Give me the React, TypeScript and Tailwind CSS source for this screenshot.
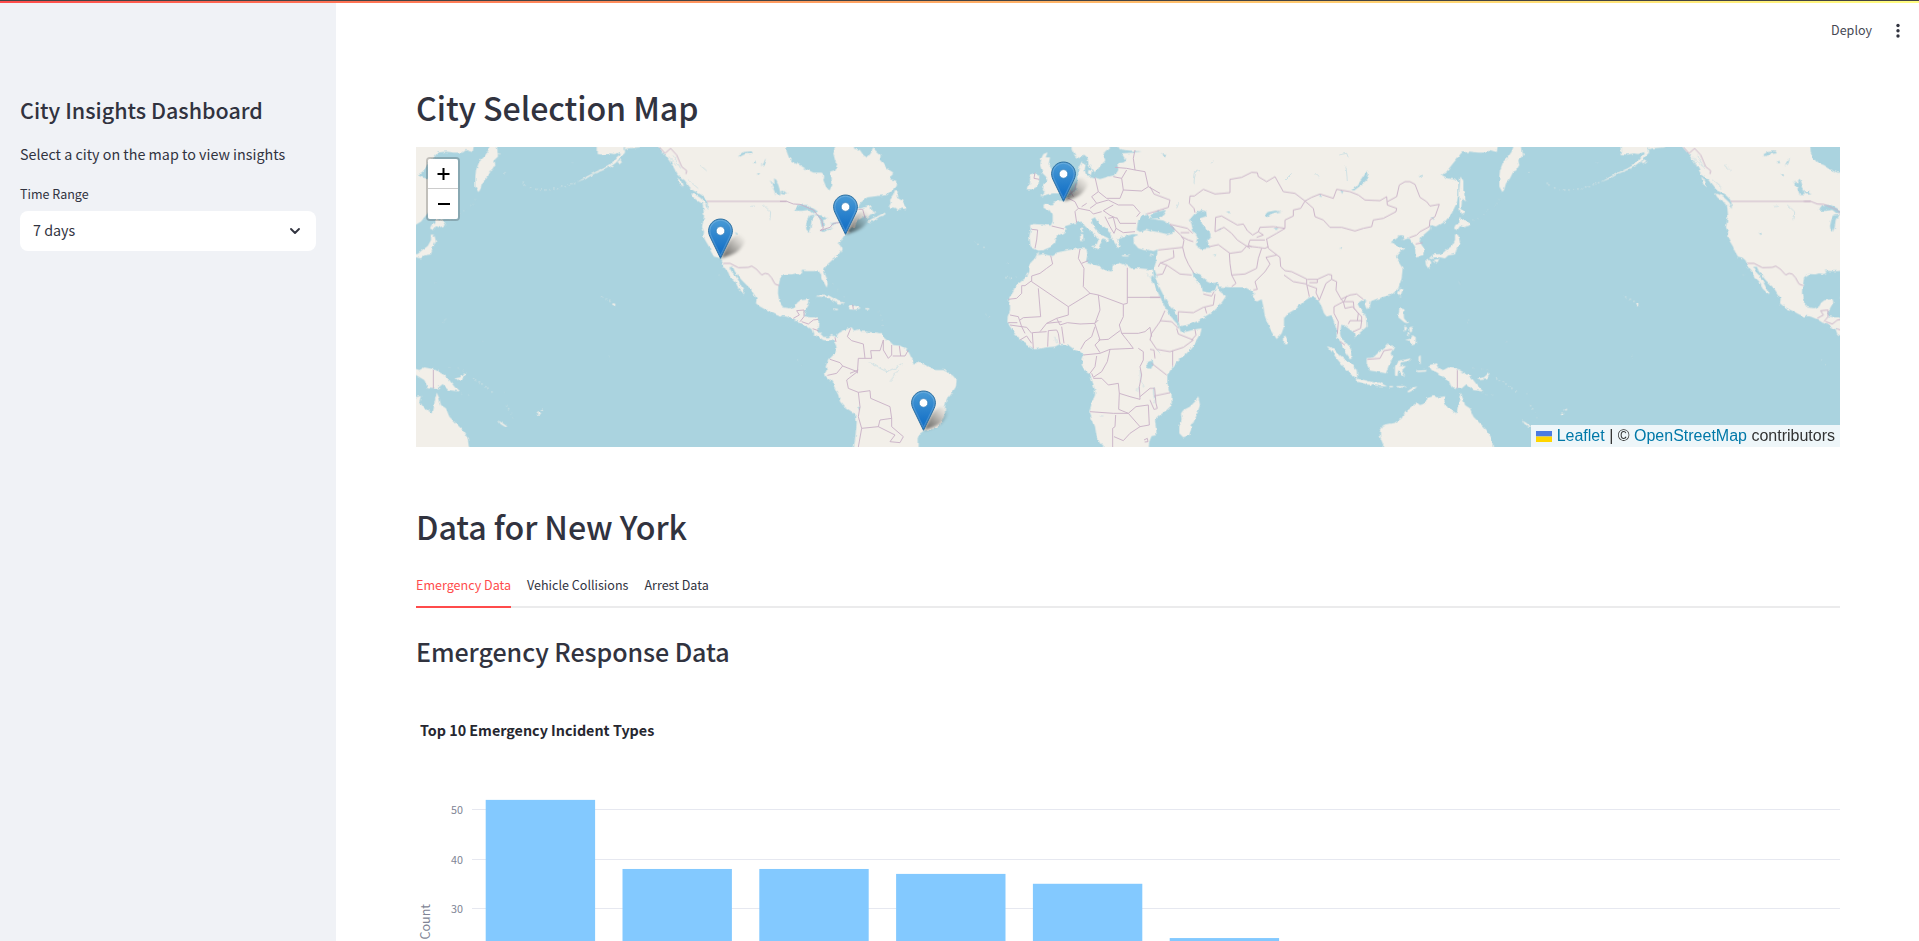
import { ChevronDown } from "lucide-react";

const WEST_LAND = [
  "745,21 760,38 768,48 775,58 783,70 790,82 797,95 803,105 812,112 825,122 832,132 840,142 850,152 862,158 875,165 888,178 893,190 893,207 886,195 878,190 880,205 882,225 880,240 876,262 882,275 880,290 888,305 897,320 903,335 912,350 925,353 935,362 940,375 945,385 955,398 962,415 972,420 980,430 985,445 995,455 1002,463 1003,455 995,440 985,420 975,405 965,395 958,382 968,380 975,395 985,408 995,420 1010,435 1020,445 1030,460 1040,475 1038,490 1050,500 1065,508 1080,515 1095,523 1110,529 1114,529 1114,498 1108,482 1104,460 1105,440 1108,428 1110,415 1114,411 1114,10 745,10",
  "843,160 855,163 870,173 885,186 892,197 880,193 862,182 850,172",
  "802,113 812,122 820,142 808,132",
  "500,127 530,110 560,94 580,86 600,74 612,62 622,50 632,42 630,36 612,42 600,40 580,44 560,42 560,10 644,10 640,30 655,25 690,22 690,10 644,10 645,38 632,52 618,68 604,78 580,90 555,100 530,114",
  "622,66 632,58 637,62 628,70",
  "606,491 614,490 617,496 610,500",
  "380,820 388,816 390,822 382,825",
  "390,810 400,806 398,812",
  "265,842 275,848 292,860 288,862 272,852",
];

const ATLANTIC_LAND = [
  "-2,414 5,408 15,402 35,403 45,400 60,402 68,398 62,392 80,393 100,393 115,392 122,402 125,415 132,428 140,443 143,432 140,415 134,400 132,388 140,375 155,362 170,350 178,340 185,328 182,318 172,306 180,308 185,298 195,285 197,280 212,278 205,272 215,262 225,262 228,252 235,240 248,232 256,226 262,234 272,222 282,222 290,214 278,216 272,208 275,195 262,200 240,206 232,204 242,188 262,172 290,168 320,165 340,150 350,138 352,124 334,118 330,108 340,98 320,85 310,70 300,60 302,45 290,35 280,25 272,40 262,53 250,45 240,30 222,26 222,10 168,10 160,40 165,60 172,75 165,90 150,95 155,115 157,135 148,152 138,140 130,120 133,105 125,98 100,98 80,88 60,75 40,68 28,55 20,35 18,10 -2,10",
  "264,243 280,234 298,226 312,218 318,222 300,230 282,240 270,246",
  "345,150 354,152 350,170 365,178 375,196 378,212 368,205 356,210 345,203 325,203 332,190 330,180 340,165",
  "-2,488 10,502 30,505 45,500 52,488 62,480 86,478 88,488 78,505 75,515 72,528 90,532 105,532 117,540 115,555 112,570 120,580 130,590 145,592 155,585 165,588 172,600 168,610 158,598 145,602 130,600 115,590 100,582 95,568 75,555 55,548 40,538 20,530 -2,527",
  "168,592 175,580 190,572 205,565 215,562 222,572 235,568 245,575 260,575 275,577 290,578 305,580 308,590 320,600 330,605 340,615 360,617 380,628 388,640 395,655 400,662 395,672 405,672 415,668 430,672 445,678 455,688 470,690 490,690 505,698 520,708 530,720 528,740 515,760 500,780 495,800 495,820 488,840 480,855 470,865 450,868 432,872 418,882 413,895 413,930 220,930 225,900 228,870 230,850 228,825 215,815 195,802 180,785 175,765 165,745 155,725 138,710 135,700 140,690 137,680 145,660 155,650 165,640 170,625 165,605",
  "107,470 120,463 145,466 160,474 175,483 196,490 175,491 160,480 140,472 120,470",
  "203,500 212,493 235,500 242,505 225,509 205,508",
  "256,504 268,505 268,509 256,508",
  "160,505 175,507 172,511 162,509",
  "775,345 790,342 815,348 830,338 850,333 880,327 905,325 920,327 922,345 918,365 940,372 960,380 975,390 995,395 1000,375 1015,368 1035,375 1055,385 1080,385 1110,388 1114,388 1114,890 1108,905 1105,930 980,930 960,910 950,890 945,860 935,835 928,815 935,790 945,765 945,750 935,720 930,700 915,690 905,675 908,655 912,645 900,635 885,630 865,615 850,612 840,612 825,620 800,622 765,628 750,620 735,610 715,595 700,575 690,560 682,545 683,530 690,510 690,490 683,480 700,455 710,435 735,415 745,395 745,380 755,365 765,355 772,340 778,335",
  "750,255 765,252 790,254 812,257 818,245 818,225 808,210 790,200 792,192 815,193 822,185 840,182 850,183 862,172 880,160 890,145 895,130 895,105 895,85 905,65 917,72 914,90 920,110 935,110 960,117 985,110 1005,105 1015,90 1012,70 1030,68 1038,62 1025,40 1060,38 1085,34 1050,32 1020,28 1008,10 1114,10 1114,328 1095,331 1075,325 1062,310 1060,292 1072,284 1060,282 1035,288 1020,292 1012,298 1022,320 1015,324 1005,310 995,295 990,280 975,262 955,250 945,232 934,238 938,252 950,270 965,285 987,296 985,304 968,298 962,310 955,325 948,318 955,300 945,285 930,272 915,258 905,245 890,248 870,254 852,260 860,268 850,278 830,290 825,310 810,322 790,330 775,332 765,325 752,320 748,290 752,270",
  "873,10 876,32 886,50 900,54 912,44 922,52 926,72 935,88 944,96 955,86 962,76 976,62 968,48 975,35 990,22 990,10",
  "790,42 803,37 797,52 810,52 806,72 816,90 822,105 838,120 836,132 850,135 846,150 838,160 815,160 795,165 780,170 795,154 785,150 790,135 803,125 798,110 788,100 780,75 784,55",
  "750,105 765,97 778,105 775,135 760,148 742,148 750,130",
  "935,318 958,316 955,328 944,324",
  "900,283 910,282 909,303 901,304",
  "904,262 910,265 907,278 903,274",
  "925,90 936,92 932,106 924,100",
  "1025,345 1047,347 1045,350 1027,349",
  "1107,347 1118,342 1116,348",
];

const EAST_LAND = [
  "-2,388 4,386 10,388 10,398 12,416 2,404 0,415 15,440 30,470 42,495 55,520 75,545 86,556 92,575 110,575 135,568 155,565 150,585 135,610 110,640 85,660 65,685 52,705 52,730 58,755 65,765 65,795 50,810 30,825 15,840 18,865 20,885 -2,890",
  "145,768 150,795 140,825 125,860 118,885 100,892 88,880 88,860 95,840 93,820 100,810 120,800 135,785",
  "-2,330 10,333 24,328 20,345 18,365 12,385 20,406 16,412 30,445 45,475 60,500 80,520 85,545 90,558 110,555 140,545 165,530 190,515 212,492 228,468 210,455 200,438 193,455 175,458 158,454 155,438 142,425 130,410 128,396 138,398 150,405 165,420 185,430 200,428 205,440 240,442 285,442 300,450 314,460 305,466 320,485 335,478 340,500 345,530 360,565 380,597 395,580 402,560 402,535 415,520 440,505 460,485 480,472 495,472 505,482 515,500 522,520 530,530 545,525 552,545 560,570 560,590 575,610 585,635 600,655 607,650 603,625 590,610 575,600 570,580 575,550 595,565 612,578 615,592 630,578 650,560 648,530 630,505 622,490 640,478 660,485 685,475 720,465 745,445 755,415 758,385 745,365 738,348 750,335 765,322 745,322 735,310 722,308 730,300 750,285 762,288 755,300 778,295 785,305 795,320 797,350 820,345 822,325 808,305 815,290 840,268 840,255 860,260 885,245 905,220 920,190 925,160 925,130 920,120 895,115 875,105 890,95 905,75 935,38 960,35 985,38 1010,38 1020,30 1040,36 1045,10 -2,10",
  "931,110 940,122 940,150 948,185 936,175 934,205 944,216 932,222 928,200 928,150",
  "928,232 955,245 960,256 940,262 930,258 922,270 912,266 916,255 928,250",
  "915,283 925,285 930,305 920,325 915,343 895,346 885,355 870,352 850,352 835,357 850,343 875,342 888,330 905,318 915,300",
  "826,360 840,360 844,368 836,387 828,375",
  "850,360 868,356 862,368",
  "1112,10 1116,50 1105,60 1108,75 1098,92 1090,95 1080,115 1068,130 1062,150 1057,156 1048,140 1048,110 1050,90 1060,65 1075,50 1085,35 1094,10",
  "1112,40 1126,42 1122,46",
  "750,443 760,448 752,470 744,462",
  "648,482 663,480 660,500 650,507 645,495",
  "748,505 760,508 762,535 775,550 764,548 745,532",
  "765,600 782,596 788,585 797,592 797,612 786,616 776,602",
  "762,560 772,562 766,575",
  "778,562 786,560 786,575 780,578",
  "772,580 780,580 776,590",
  "402,583 415,600 412,613 402,612",
  "530,618 550,625 570,645 600,670 620,690 622,715 605,705 580,680 560,655 545,635",
  "620,716 650,722 672,728 690,728 712,740 690,738 650,733 622,725",
  "650,655 670,652 685,638 700,628 715,610 732,622 722,640 727,655 715,680 708,700 690,696 660,692 650,672",
  "735,680 742,664 755,660 785,655 780,662 750,668 748,678 768,678 756,690 766,708 756,702 745,690 742,712 735,702",
  "806,650 812,645 812,670 806,665",
  "800,692 830,690 828,695 802,696",
  "718,738 730,738 728,742 718,742",
  "740,738 768,738 765,743 740,742",
  "772,754 790,742 802,740 790,750 775,758",
  "835,675 858,670 865,685 880,690 895,682 925,688 955,705 970,720 985,740 1000,755 970,750 950,732 935,745 905,742 895,720 870,705 862,698 845,690",
  "985,716 1002,712 1015,700 1019,704 1008,718 990,720",
  "690,870 700,855 735,848 755,835 765,815 790,795 800,787 810,795 825,790 830,775 850,768 865,772 885,768 880,785 895,805 920,820 925,790 932,758 940,775 945,795 960,805 970,830 990,850 1010,870 1025,895 1030,930 695,930 700,915 690,890",
];

const WEST_WATER = [
  "1078,122 1084,128 1086,140 1092,150 1098,165 1112,165 1108,145 1100,120 1092,115 1094,130",
  "985,45 1000,36 1025,34 1028,40 1005,42 990,50",
  "1052,78 1060,66 1068,55 1062,72",
  "1028,68 1036,62 1038,70",
  "974,276 983,280 981,286",
  "1040,100 1050,100 1048,106",
];

const ATLANTIC_WATER = [
  "42,212 55,195 80,195 100,205 115,216 98,220 85,210 65,213",
  "78,258 82,240 90,226 104,224 95,240 92,262 86,276 79,268",
  "104,222 125,226 142,236 130,240 132,258 125,262 122,244",
  "118,272 140,265 158,260 132,276",
  "150,250 178,246 160,256",
  "-2,155 10,152 22,160 8,160",
  "1075,240 1086,228 1098,226 1092,220 1104,222 1110,236 1114,236 1114,274 1098,270 1080,276 1070,270",
  "1098,668 1110,664 1118,670 1114,686 1100,684",
  "232,796 240,800 238,812",
];

const EAST_WATER = [
  "-2,236 20,238 40,242 62,254 76,268 68,278 50,282 25,276 -2,272",
  "0,222 25,214 48,210 40,224 28,234 5,236",
  "120,238 135,220 155,210 168,214 170,228 152,234 152,250 165,262 178,270 182,290 172,300 180,325 155,328 138,315 142,292 130,270",
  "604,150 620,138 635,118 652,92 656,100 648,122 628,140 612,152",
  "346,230 352,216 375,212 395,214 368,220 352,234",
  "370,266 385,262 380,270",
  "204,272 210,266 212,272",
  "188,346 198,342 196,348",
  "506,166 514,162 514,172",
  "572,150 580,152 576,162",
  "568,324 576,324 576,330",
  "228,216 238,214 240,220",
  "36,40 48,42 46,52",
  "-4,666 8,660 10,675 -2,684",
  "806,108 818,104 812,112",
  "842,232 852,232 848,240",
];

const RIVERS_ATLANTIC =
  "M1080,690 1082,720 1092,740 M1120,745 1124,790 M1075,740 1072,755 M1104,400 1118,425 M824,590 830,610 M270,668 300,685 320,695 350,682 365,670 M330,725 355,690 M960,828 970,828";
const RIVERS_EAST =
  "M132,130 136,95 150,92 M184,70 190,62 M565,45 590,40 596,55 M588,80 592,120 M400,125 425,100 M495,100 505,110 M80,205 86,190 M22,630 30,640 M10,745 14,780";
const RIVERS_WEST =
  "M775,50 800,75 M780,60 795,92 M790,48 812,85 M835,120 865,145 M870,75 890,92 M1020,200 1035,198 M1060,195 1082,215 1080,240";

const WEST_BORDERS =
  "M748,21 765,40 782,25 800,45 815,80 830,92 828,102 M890,184 1130,184 M940,370 960,370 985,383 1015,382 1025,378 1040,388 1055,405 1065,400 1075,402 1085,414 1095,432 1108,437";

const ATLANTIC_BORDERS =
  "M0,184 20,184 40,192 60,193 100,210 125,240 130,265 120,272 150,262 160,250 178,248 M235,208 248,208 252,222 255,235" +
  "M812,347 818,372 800,385 780,400 755,408 755,425 M755,422 735,437 725,437 725,460 710,475 685,478 M755,425 865,500 M775,445 782,530 730,533 720,540 M865,500 930,460 910,440 912,385 895,355 900,327 M905,370 925,362" +
  "M930,460 955,465 1030,493 1042,490 1042,383 M1042,472 1140,472 M865,500 865,525 830,535 800,550 780,575 M830,535 840,555 862,548 900,552 945,550 955,540 M955,465 960,510 945,550 M945,560 935,590 915,605 902,628 M1030,493 1030,530 1018,555 1025,580 M955,600 985,598 1020,572 M945,552 960,600 945,615 960,638" +
  "M910,645 960,640 990,628 1060,625 1045,605 1025,580 M1025,580 1075,580 1095,575 1110,562 1115,590 M990,628 982,665 965,695 940,712 935,700 M950,648 945,680 930,700 M940,715 965,715 985,735 1015,730 1018,760 1050,770 1080,778 1078,740 1085,705 1080,680 1090,660 1090,635 1075,625 M930,815 1000,820 1045,820 M1018,760 1016,808 1045,820 M1007,825 1005,860 998,865 998,921 M1045,820 1080,860 1050,880 1030,902 1002,890 M1045,820 1068,800 1105,795 1108,855 1080,860 M1080,770 1110,745 M1092,900 1102,895 1104,905 1094,906" +
  "M690,525 715,530 725,560 M685,548 712,548 M690,555 740,562 755,580 M720,600 740,588 755,610 M757,578 760,625 M757,578 800,575 M805,572 803,620 M805,572 830,570 835,580 840,612 M845,560 852,610 M725,560 735,580 M800,550 845,545" +
  "M755,268 773,270 770,300 765,325 M815,258 852,267 M865,175 885,185 895,205 885,215 890,248 M870,150 880,170 M888,130 884,150 866,165 M895,205 930,212 940,222 965,215 M945,112 955,155 935,170 950,190 930,205 M955,155 980,175 1020,175 1030,150 1025,115 1000,110 M1005,82 1040,85 1065,90 1060,55 1065,30 M1040,90 1025,115 M1030,150 1085,153 1105,140 1095,95 1065,90 M1105,140 1140,160 M950,190 985,180 1015,195 1060,195 1080,218 1070,230 M970,212 1000,195 M970,212 990,226 1010,235 M975,230 990,260 1002,280 1008,265 1030,278 1065,275 M1010,232 1020,250 1068,250 M985,235 1000,232 1008,265 M905,200 920,190" +
  "M212,565 202,590 215,602 250,612 255,655 235,655 232,700 M150,658 180,668 188,678 170,700 142,706 M188,678 232,695 200,720 205,745 235,757 240,800 235,830 245,865 M235,757 270,752 272,775 330,800 335,835 300,840 295,860 245,865 235,921 M335,835 335,860 370,890 360,908 330,905 345,885 295,860 M255,655 275,655 272,632 300,632 310,600 M310,600 310,630 325,655 335,645 335,615 M338,648 375,648 385,630 M358,618 362,648 M210,700 235,690" +
  "M40,535 58,525 50,512 72,510 M72,510 72,530 60,545 M65,545 85,552 100,540 115,538 M98,566 115,572 M165,592 168,606 M218,494 220,508 M765,98 762,115 778,118";

const EAST_BORDERS =
  "M135,218 132,205 118,190 120,168 133,168 160,148 195,162 240,158 240,118 275,112 305,97 322,98 325,110 350,125 375,110 400,155 435,160 465,183 M465,183 485,172 510,162 550,175 560,148 600,155 625,165 645,180 690,182 710,170 712,195 740,205 738,215 700,235 670,240 665,260 640,265 615,273 575,262 540,262 520,240 495,230 490,205 465,183 M712,185 740,170 748,135 765,125 780,125 795,133 810,172 830,185 840,198 868,193 855,230 840,240 838,260 810,275 800,285 778,293 M465,183 452,205 430,210 430,228 405,240 405,265 380,280 348,298 M350,298 355,325 390,352 392,380 405,392" +
  "M195,275 197,232 215,228 262,255 280,252 292,272 308,285 325,275 340,285 320,292 M195,275 222,262 245,280 262,300 300,325 M405,265 370,260 330,262 325,275 M300,300 295,315 305,320 M300,300 345,300 M178,320 205,314 240,340 275,335 290,318 325,322 345,325 355,320 M238,340 240,370 245,405 258,430 245,440 M245,405 285,402 320,385 325,355 335,325 M310,450 322,448 315,425 345,395 360,372 348,352 380,345 M405,392 425,395 470,417 470,432 430,425 402,405 M472,418 502,418 502,428 478,428 M502,418 535,403 545,405 545,418 560,425 558,450 572,475 M470,432 478,470 M472,435 500,445 498,458 508,480 M545,418 528,430 508,480" +
  "M572,475 580,485 552,500 552,520 565,545 562,582 M572,478 600,465 620,462 640,478 M590,468 582,485 610,485 612,505 635,530 635,545 M580,485 585,505 608,500 625,520 622,542 M595,552 600,542 635,542 632,565 610,575 M797,312 818,308" +
  "M25,330 98,322 105,350 115,372 132,400 M98,322 102,300 92,285 60,255 M60,253 112,265 128,280 M95,290 115,300 130,305 M92,278 118,278 M70,330 72,352 30,370 25,380 M50,375 90,402 125,405 M20,405 38,402 50,375 30,368 M85,545 85,515 130,518 160,502 190,495 195,462 M165,502 170,520 M160,462 185,468 192,455 M0,140 12,162 60,180 55,202 30,210 -10,222 M0,472 32,472" +
  "M80,565 85,582 130,600 100,622 60,635 20,628 0,598 M135,568 138,585 125,600 M30,542 65,545 85,565 M45,512 30,545 5,580 0,600 M68,632 68,678 M5,670 50,705 M12,768 60,758 M0,745 14,745 18,790 22,805 12,808 0,780 M0,628 12,630 15,655 M652,658 690,655 702,632 725,628 M922,690 922,745 M570,605 585,615";

const ISLAND_DOTS = [
  [285, 98], [340, 130], [345, 135], [362, 144], [378, 148], [392, 150], [405, 150], [420, 149], [432, 147], [445, 146], [455, 141], [466, 140], [478, 134], [486, 131], [494, 128],
  [575, 471], [589, 478], [600, 484],
  [188, 714], [196, 720], [208, 726], [216, 732], [228, 740], [234, 745], [246, 756],
  [290, 797], [296, 806],
  [1704, 313], [1722, 322], [1788, 413], [1804, 414],
];

const FAINT_DOTS = [
  [487, 68], [104, 540], [101, 548], [218, 605], [596, 649], [76, 428], [928, 405],
  [120, 684], [145, 687], [160, 690], [302, 820], [309, 833], [155, 762], [176, 765], [282, 758],
  [196, 178], [190, 190], [182, 196], [162, 212], [150, 222], [132, 236], [120, 240],
  [1697, 310], [1792, 370], [1795, 413], [1818, 411], [1730, 522], [1738, 530],
  [1160, 660], [1175, 674], [1268, 432], [1282, 448], [1300, 470], [1405, 515], [1412, 525], [1416, 540], [1416, 556],
];

const MARKERS = [
  { x: 292, y: 71 },
  { x: 417, y: 47 },
  { x: 635, y: 14 },
  { x: 495, y: 243 },
];

function Shapes({ list }: { list: string[] }) {
  return (
    <>
      {list.map((points) => (
        <polygon key={points} points={points} />
      ))}
    </>
  );
}

function WorldMap() {
  return (
    <svg className="block h-full w-full" viewBox="0 0 1424 300" aria-hidden="true">
      <defs>
        <filter id="coast" x="0" y="0" width="100%" height="100%" colorInterpolationFilters="sRGB">
          <feTurbulence type="fractalNoise" baseFrequency="0.2" numOctaves="2" seed="4" />
          <feDisplacementMap in="SourceGraphic" scale="3.5" xChannelSelector="R" yChannelSelector="G" />
        </filter>
        <g id="land">
          <g fill="#f2efe9">
            <g transform="translate(-18 0)">
              <Shapes list={WEST_LAND} />
              {ISLAND_DOTS.map(([x, y]) => (
                <circle key={`${x}-${y}`} cx={x} cy={y} r={2} opacity={0.75} />
              ))}
              {FAINT_DOTS.map(([x, y]) => (
                <circle key={`${x}-${y}`} cx={x} cy={y} r={1.8} opacity={0.35} />
              ))}
            </g>
            <g transform="translate(1092 0)">
              <Shapes list={ATLANTIC_LAND} />
            </g>
            <g transform="translate(2202 0)">
              <Shapes list={EAST_LAND} />
            </g>
          </g>
          <g fill="#aad3df">
            <g transform="translate(-18 0)">
              <Shapes list={WEST_WATER} />
            </g>
            <g transform="translate(1092 0)">
              <Shapes list={ATLANTIC_WATER} />
            </g>
            <g transform="translate(2202 0)">
              <Shapes list={EAST_WATER} />
            </g>
          </g>
          <g fill="none" stroke="#aad3df" strokeWidth={2} opacity={0.7}>
            <path transform="translate(-18 0)" d={RIVERS_WEST} />
            <path transform="translate(1092 0)" d={RIVERS_ATLANTIC} />
            <path transform="translate(2202 0)" d={RIVERS_EAST} />
          </g>
        </g>
        <g id="borders" fill="none" stroke="#c9b1c7" strokeWidth={2.8} strokeLinejoin="round">
          <path transform="translate(-18 0)" d={WEST_BORDERS} />
          <path transform="translate(1092 0)" d={ATLANTIC_BORDERS} />
          <path transform="translate(2202 0)" d={EAST_BORDERS} />
        </g>
      </defs>
      <rect width="1424" height="300" fill="#aad3df" />
      <g filter="url(#coast)">
        <g transform="scale(0.33333) translate(0 -21)">
          <use href="#land" x="-3072" />
          <use href="#land" />
          <use href="#land" x="3072" />
        </g>
      </g>
      <g transform="scale(0.33333) translate(0 -21)">
        <use href="#borders" x="-3072" />
        <use href="#borders" />
        <use href="#borders" x="3072" />
      </g>
    </svg>
  );
}

function Marker() {
  return (
    <svg className="block overflow-visible" width="41" height="41" viewBox="0 0 41 41">
      <defs>
        <linearGradient id="pin" x1="0" y1="0" x2="0" y2="1">
          <stop offset="0" stopColor="#4a9bd6" />
          <stop offset="0.75" stopColor="#1a75c8" />
          <stop offset="1" stopColor="#126fc6" />
        </linearGradient>
        <linearGradient id="pinShadow" gradientUnits="userSpaceOnUse" x1="13" y1="40" x2="36" y2="17">
          <stop offset="0" stopColor="#000" stopOpacity="0.6" />
          <stop offset="0.4" stopColor="#000" stopOpacity="0.36" />
          <stop offset="0.7" stopColor="#000" stopOpacity="0.14" />
          <stop offset="0.95" stopColor="#000" stopOpacity="0" />
        </linearGradient>
        <filter id="soft" x="-30%" y="-30%" width="160%" height="160%">
          <feGaussianBlur stdDeviation="1.6" />
        </filter>
      </defs>
      <path
        d="M13 40 L20 25 C24 18 32 15 36 18 C39 21 36 28 30 33 C26 36.5 19 38.5 13 40z"
        fill="url(#pinShadow)"
        filter="url(#soft)"
      />
      <path
        d="M12.5 1C6 1 .6 6.300.6 12.800c0 2.600.9 5 2.100 7.300L12.500 40.300l9.800-20.200c1.200-2.300 2.100-4.700 2.100-7.300C24.400 6.300 19 1 12.500 1z"
        fill="url(#pin)"
        stroke="#2e6f9f"
        strokeWidth="1"
      />
      <path
        d="M12.500 2.200C6.700 2.200 1.800 7 1.800 12.800c0 2.300.8 4.500 1.900 6.700l8.800 18 8.800-18c1.100-2.200 1.900-4.400 1.900-6.700C23.200 7 18.300 2.200 12.500 2.200z"
        fill="none"
        stroke="#fff"
        strokeOpacity="0.17"
        strokeWidth="1.1"
      />
      <circle cx="12.500" cy="12.900" r="4.300" fill="#fff" stroke="#2e78b3" strokeWidth="0.7" />
    </svg>
  );
}

function CityMap() {
  return (
    <div className="relative mt-[18px] h-[300px] w-[1424px] overflow-hidden bg-[#aad3df]">
      <WorldMap />
      {MARKERS.map(({ x, y }) => (
        <div key={x} className="absolute" style={{ left: x, top: y }}>
          <Marker />
        </div>
      ))}
      <div className="absolute left-[10px] top-[10px] flex w-[34px] flex-col rounded-[4px] border-2 border-black/20 bg-clip-padding">
        <button className="flex h-[30px] items-center justify-center rounded-t-[2px] border-b border-[#ccc] bg-white">
          <svg width="14" height="14" viewBox="0 0 14 14">
            <path d="M7.500 1v12M1.500 7h12" stroke="#000" strokeWidth="2" />
          </svg>
        </button>
        <button className="flex h-[30px] items-center justify-center rounded-b-[2px] bg-white">
          <svg width="14" height="14" viewBox="0 0 14 14">
            <path d="M2 7h12" stroke="#000" strokeWidth="2" />
          </svg>
        </button>
      </div>
      <div className="absolute bottom-0 right-0 flex h-[22px] items-center whitespace-pre bg-white/80 px-[5px] font-['Liberation_Sans',sans-serif] text-[16px] leading-[22px] text-[#333]">
        <svg className="mr-[5px]" width="16" height="11" viewBox="0 0 16 11">
          <path fill="#4C7BE1" d="M0 0h16v5.500H0z" />
          <path fill="#FFD500" d="M0 5.500h16V11H0z" />
        </svg>
        <a className="text-[#0078A8]">Leaflet</a> | © <a className="text-[#0078A8]">OpenStreetMap</a> contributors
      </div>
    </div>
  );
}

const COUNTS = [52, 38, 38, 37, 35, 24];
const TICKS = [50, 40, 30];
const yFor = (count: number) => 1056.500 - 4.935 * count - 668;

function IncidentChart() {
  return (
    <svg className="block h-[273px] w-[1424px] shrink-0" viewBox="0 0 1424 273">
      <text x="4" y="68" fill="#262730" fontSize="14.320" fontWeight="700">
        Top 10 Emergency Incident Types
      </text>
      {TICKS.map((tick) => (
        <g key={tick}>
          <rect x="56" y={Math.floor(yFor(tick))} width="1368" height="1" fill="#e6e8f0" />
          <text x="47" y={yFor(tick) + 4.500} textAnchor="end" fill="#808495" fontSize="10.750">
            {tick}
          </text>
        </g>
      ))}
      {COUNTS.map((count, i) => (
        <rect key={i} x={69.700 + i * 136.800} y={yFor(count)} width="109.400" height="300" fill="#83c9ff" />
      ))}
      <text transform="translate(14.300 271.500) rotate(-90)" fill="#808495" fontSize="12.530">
        Count
      </text>
    </svg>
  );
}

export default function App() {
  return (
    <div className="flex h-screen w-full flex-col overflow-hidden bg-white font-['Noto_Sans_CJK_JP',sans-serif] text-[#31333f]">
      <div className="h-px shrink-0 bg-[#444]" />
      <div className="h-[2px] shrink-0 bg-linear-to-r from-[#ff4b4b] to-[#fffd80]" />
      <div className="flex min-h-0 flex-1">
        <aside className="w-[336px] shrink-0 bg-[#f0f2f6] px-5 pt-[92px]">
          <h2 className="text-[21.500px] font-medium leading-[29px]">City Insights Dashboard</h2>
          <p className="mt-[17px] text-[14.320px] leading-[26px]">Select a city on the map to view insights</p>
          <label className="mt-[16px] block text-[12.530px] leading-[22px]">Time Range</label>
          <div className="mt-[6px] flex h-10 items-center justify-between rounded-lg bg-white pl-[13px] pr-[13px] text-[14.320px]">
            <span className="-mt-[3px]">7 days</span>
            <ChevronDown size={16} strokeWidth={2.8} />
          </div>
        </aside>
        <main className="relative flex flex-1 flex-col pl-20 pt-[83px]">
          <div className="absolute right-[15px] top-[16px] flex items-center gap-[20px] text-[12.530px] leading-[22px]">
            <span className="opacity-90">Deploy</span>
            <svg width="12" height="16" viewBox="0 0 12 16" fill="#31333f">
              <circle cx="6" cy="3.500" r="1.700" />
              <circle cx="6" cy="8.800" r="1.700" />
              <circle cx="6" cy="14" r="1.700" />
            </svg>
          </div>
          <h1 className="text-[32.200px] font-medium leading-[43px] tracking-[-0.09px]">City Selection Map</h1>
          <CityMap />
          <h1 className="mt-[58px] text-[32.200px] font-medium leading-[43px] tracking-[-0.09px]">Data for New York</h1>
          <div className="mt-[16px] flex h-[44px] w-[1424px] shrink-0 gap-4 border-b-2 border-[#ebebec] text-[12.550px] leading-[42px]">
            <span className="h-[44px] border-b-2 border-[#ff4b4b] text-[#ff4b4b]">Emergency Data</span>
            <span>Vehicle Collisions</span>
            <span>Arrest Data</span>
          </div>
          <h2 className="mt-[26px] text-[25.060px] font-medium leading-[34px] tracking-[-0.07px]">Emergency Response Data</h2>
          <IncidentChart />
        </main>
      </div>
    </div>
  );
}
